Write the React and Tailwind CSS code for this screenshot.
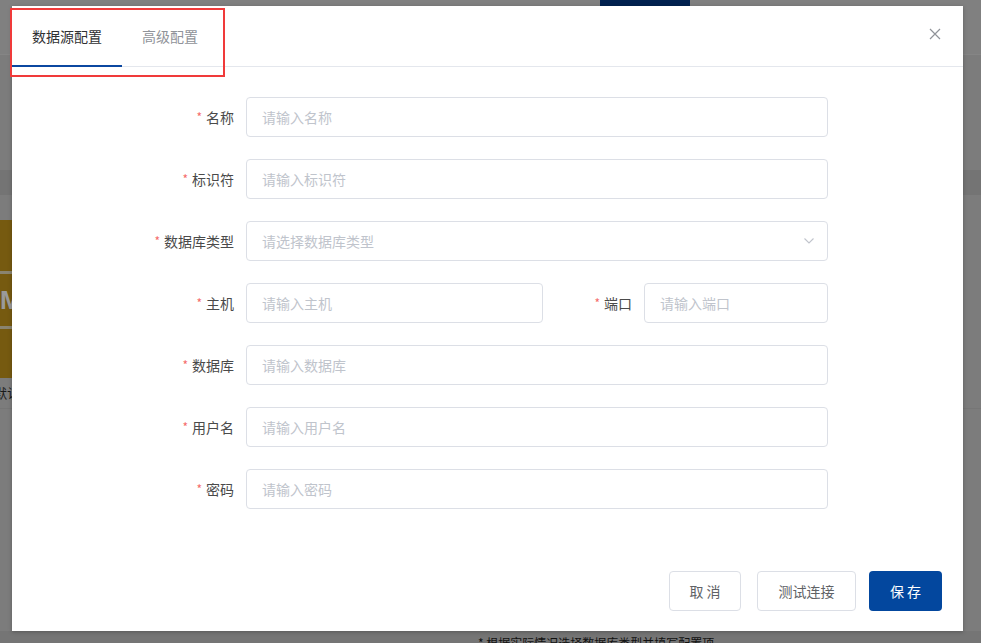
import React from "react";

const font = { fontFamily: '"Noto Sans CJK SC", "Noto Sans", "Liberation Sans", sans-serif' };

function Label({ children, className = "" }) {
  return (
    <div className={"flex items-center justify-end text-[14px] text-[#4a4a4a] " + className}>
      <span className="text-[#f56c6c] mr-[4px] text-[12px] leading-none">*</span>
      <span>{children}</span>
    </div>
  );
}

function Input({ placeholder, className = "", select = false }) {
  return (
    <div
      className={
        "h-[40px] border border-[#dcdfe6] rounded-[4px] bg-white flex items-center pl-[15px] pr-[13px] text-[14px] text-[#c0c4cc] " +
        className
      }
    >
      <span className="flex-1">{placeholder}</span>
      {select && (
        <svg width="10" height="6" viewBox="0 0 10 6" fill="none">
          <path d="M0.5 0.5 L5 5 L9.5 0.5" stroke="#c0c4cc" strokeWidth="1.1" />
        </svg>
      )}
    </div>
  );
}

function Row({ label, placeholder, select }) {
  return (
    <div className="flex items-center">
      <Label className="w-[222px]">{label}</Label>
      <Input placeholder={placeholder} select={select} className="ml-3 w-[582px]" />
    </div>
  );
}

export default function App() {
  return (
    <div className="relative w-[981px] h-[643px] overflow-hidden bg-[#7e7e7e]" style={font}>
      {/* dimmed background page */}
      <div className="flex flex-col w-full h-full">
        <div className="h-[55px] bg-[#808080] border-b border-[#858585]">
          <div className="ml-[600px] w-[90px] h-[6px] bg-[#00214f]" />
        </div>
        <div className="h-[115px] bg-[#7c7c7c]" />
        <div className="h-[25px] bg-[#747474]" />
        <div className="h-[25px] bg-[#7c7c7c]" />
        <div className="h-[158px] bg-[#7c7c7c] flex">
          <div className="w-[60px] h-full bg-[#765a10] flex flex-col">
            <div className="h-[51px]" />
            <div className="h-[3px] bg-[#8a8470]" />
            <div className="h-[52px] flex items-center text-[26px] font-bold text-[#9a9a9a] leading-none" style={{ fontFamily: '"Liberation Sans", sans-serif' }}>
              MM
            </div>
            <div className="h-[3px] bg-[#8a8470]" />
          </div>
        </div>
        <div className="h-[30px] bg-[#7c7c7c] flex items-center text-[13px] text-[#1a1a1a] pl-0">
          <span className="-ml-[6px]">默认</span>
        </div>
        <div className="h-[223px] bg-[#7c7c7c] border-t border-[#767676]" />
        <div className="flex-1 bg-[#757575] relative">
          <div className="absolute left-[478px] top-[6px] text-[12px] text-[#111] leading-none">
            * 根据实际情况选择数据库类型并填写配置项
          </div>
        </div>
      </div>

      {/* modal */}
      <div className="absolute left-[12px] top-[6px] w-[951px] h-[625px] bg-white flex flex-col shadow-[0_1px_4px_rgba(0,0,0,0.25)]">
        <div className="relative h-[61px] border-b border-[#e4e7ed] flex items-stretch">
          <div className="px-5 flex items-center text-[14px] text-[#303133] border-b-2 border-[#0b47a0] -mb-px pt-[1px]">
            数据源配置
          </div>
          <div className="px-5 flex items-center text-[14px] text-[#909399] pt-[1px]">高级配置</div>
          <div className="absolute right-[22px] top-[22px]">
            <svg width="12" height="12" viewBox="0 0 12 12" fill="none">
              <path d="M1 1 L11 11 M11 1 L1 11" stroke="#909399" strokeWidth="1.2" />
            </svg>
          </div>
        </div>

        <div className="flex flex-col gap-[22px] pt-[30px]">
          <Row label="名称" placeholder="请输入名称" />
          <Row label="标识符" placeholder="请输入标识符" />
          <Row label="数据库类型" placeholder="请选择数据库类型" select />
          <div className="flex items-center">
            <Label className="w-[222px]">主机</Label>
            <Input placeholder="请输入主机" className="ml-3 w-[297px]" />
            <Label className="w-[89px]">端口</Label>
            <Input placeholder="请输入端口" className="ml-3 w-[184px]" />
          </div>
          <Row label="数据库" placeholder="请输入数据库" />
          <Row label="用户名" placeholder="请输入用户名" />
          <Row label="密码" placeholder="请输入密码" />
        </div>

        <div className="mt-auto flex justify-end pr-[21px] pb-[20px]">
          <button className="w-[72px] h-[40px] border border-[#dcdfe6] rounded-[4px] text-[14px] text-[#606266] bg-white">
            取 消
          </button>
          <button className="ml-4 w-[99px] h-[40px] border border-[#dcdfe6] rounded-[4px] text-[14px] text-[#606266] bg-white">
            测试连接
          </button>
          <button className="ml-[13px] w-[73px] h-[40px] rounded-[4px] text-[14px] text-white bg-[#03479e]">
            保 存
          </button>
        </div>
      </div>

      {/* red annotation box */}
      <div className="absolute left-[10px] top-[8px] w-[215px] h-[69px] border-2 border-[#f03a3a]" />
    </div>
  );
}
